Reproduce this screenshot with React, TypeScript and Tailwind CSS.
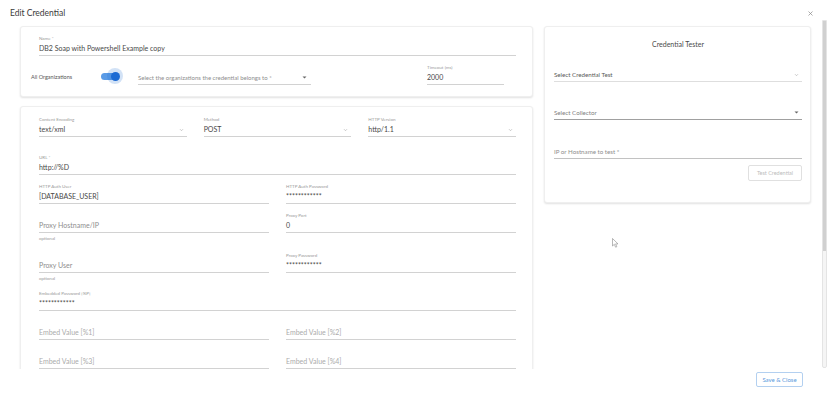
import React from 'react';

function Chevron() {
  return (
    <svg width="5" height="4" viewBox="0 0 5 4" className="shrink-0">
      <path d="M1 1.2 L2.5 2.7 L4 1.2" fill="none" stroke="#a8a8a8" strokeWidth="0.6" />
    </svg>
  );
}

function Caret() {
  return (
    <svg width="5" height="3" viewBox="0 0 5 3" className="shrink-0">
      <path d="M0.5 0.5 H4.5 L2.5 2.6 Z" fill="#666" />
    </svg>
  );
}

interface FieldProps {
  label?: string;
  value?: string;
  placeholder?: string;
  chevron?: boolean;
  helper?: string;
  dim?: boolean;
}

function Field({ label, value, placeholder, chevron, helper, dim }: FieldProps) {
  return (
    <div>
      <div className="h-[8px] text-[4.5px] leading-[8px] text-[#9a9a9a]">{label}</div>
      <div className="h-[13px] border-b border-[#d2d2d2] flex items-start justify-between pr-[3px]">
        {value ? (
          <span className="text-[7px] leading-[11px] text-[#484848]">{value}</span>
        ) : (
          <span className={`text-[7px] leading-[11px] ${dim ? 'text-[#ababab]' : 'text-[#8e8e8e]'}`}>{placeholder}</span>
        )}
        {chevron && (
          <span className="h-[11px] flex items-center">
            <Chevron />
          </span>
        )}
      </div>
      {helper && <div className="h-[11px] pt-[3px] text-[4.5px] leading-[6px] text-[#9a9a9a]">{helper}</div>}
    </div>
  );
}

function Toggle() {
  return (
    <div className="relative w-[37px] h-[16px] mb-[1px] shrink-0">
      <div className="absolute left-0 top-[4.5px] w-[18px] h-[7px] rounded-full bg-[#5a9be6]" />
      <div className="absolute left-[6px] top-0 w-[16px] h-[16px] rounded-full bg-[#1f6fd4]/20" />
      <div className="absolute left-[9.5px] top-[3.5px] w-[9px] h-[9px] rounded-full bg-[#1b6ad3]" />
    </div>
  );
}

const card = 'bg-white rounded-[3px] border border-[#efefef] shadow-[0_1px_2px_rgba(0,0,0,0.12)]';

export default function App() {
  return (
    <div className="relative w-[827px] h-[400px] bg-white overflow-hidden font-[Lato,sans-serif] flex flex-col">
      <div className="h-[20px] shrink-0 flex items-start justify-between pt-[8px] pl-[10px] pr-[14px]">
        <h1 className="text-[8.5px] leading-[10px] text-[#3a3a3a]">Edit Credential</h1>
        <svg width="5" height="5" viewBox="0 0 5 5" className="mt-[3px]">
          <path d="M0.5 0.5 L4.5 4.5 M4.5 0.5 L0.5 4.5" stroke="#888" strokeWidth="0.7" />
        </svg>
      </div>

      <div className="h-[349px] shrink-0 flex overflow-hidden">
        <div className="ml-[20px] w-[513px] pt-[6px] flex flex-col">
          <div className={`${card} h-[71px] shrink-0 pt-[8px]`}>
            <div className="ml-[18px] mr-[16px]">
              <Field label="Name *" value="DB2 Soap with Powershell Example copy" />
            </div>
            <div className="flex items-end mt-[8px] ml-[10px]">
              <span className="w-[70px] h-[6px] mb-[5px] text-[5.5px] leading-[6px] text-[#555]">All Organizations</span>
              <Toggle />
              <div className="w-[173px] h-[13px] border-b border-[#d2d2d2] flex items-start justify-between pr-[4px]">
                <span className="text-[6px] leading-[11px] text-[#8e8e8e]">Select the organizations the credential belongs to *</span>
                <span className="h-[11px] flex items-center">
                  <Caret />
                </span>
              </div>
              <div className="ml-[116px] w-[77px]">
                <Field label="Timeout (ms)" value="2000" />
              </div>
            </div>
          </div>

          <div className={`${card} mt-[9px] shrink-0 pt-[9px] pl-[18px] pr-[16px] pb-[20px]`}>
            <div className="grid grid-cols-3 gap-x-[17px]">
              <Field label="Content Encoding" value="text/xml" chevron />
              <Field label="Method" value="POST" chevron />
              <Field label="HTTP Version" value="http/1.1" chevron />
            </div>
            <div className="mt-[17px]">
              <Field label="URL *" value="http://%D" />
            </div>
            <div className="grid grid-cols-2 gap-x-[17px] mt-[8px]">
              <Field label="HTTP Auth User" value="[DATABASE_USER]" />
              <Field label="HTTP Auth Password" value="************" />
            </div>
            <div className="grid grid-cols-2 gap-x-[17px] mt-[8px]">
              <Field placeholder="Proxy Hostname/IP" helper="optional" />
              <Field label="Proxy Port" value="0" />
            </div>
            <div className="grid grid-cols-2 gap-x-[17px] mt-[8px]">
              <Field placeholder="Proxy User" helper="optional" />
              <Field label="Proxy Password" value="************" />
            </div>
            <div className="mt-[6px]">
              <Field label="Embedded Password [%P]" value="************" />
            </div>
            <div className="grid grid-cols-2 gap-x-[17px] mt-[8px]">
              <Field placeholder="Embed Value [%1]" dim />
              <Field placeholder="Embed Value [%2]" dim />
            </div>
            <div className="grid grid-cols-2 gap-x-[17px] mt-[8px]">
              <Field placeholder="Embed Value [%3]" dim />
              <Field placeholder="Embed Value [%4]" dim />
            </div>
          </div>
        </div>

        <div className="ml-[11px] w-[267px] pt-[6px]">
          <div className={`${card} h-[177px] pt-[12px] pl-[9px] pr-[8px]`}>
            <div className="text-center text-[7px] leading-[10px] text-[#4a4a4a]">Credential Tester</div>
            <div className="mt-[20px] h-[13px] border-b border-[#dedede] flex items-start justify-between pr-[3px]">
              <span className="text-[6.2px] leading-[11px] text-[#585858]">Select Credential Test</span>
              <span className="h-[11px] flex items-center">
                <Chevron />
              </span>
            </div>
            <div className="mt-[25px] h-[13px] border-b border-[#a0a0a0] flex items-start justify-between pr-[3px]">
              <span className="text-[6.2px] leading-[11px] text-[#808080]">Select Collector</span>
              <span className="h-[11px] flex items-center">
                <Caret />
              </span>
            </div>
            <div className="mt-[26px] h-[13px] border-b border-[#c2c2c2] flex items-start">
              <span className="text-[6.2px] leading-[11px] text-[#8e8e8e]">IP or Hostname to test *</span>
            </div>
            <div className="mt-[6px] flex justify-end">
              <button className="h-[16px] w-[54px] rounded-[2px] border border-[#e0e0e0] text-[5.5px] text-[#bcbcbc]">
                Test Credential
              </button>
            </div>
          </div>
        </div>

        <div className="ml-[11px] w-[5px] h-[348px] rounded-b-[2px] border border-[#e4e4e4] bg-[#f5f5f5] flex flex-col">
          <div className="h-[230px] bg-[#d0d0d0]" />
        </div>
      </div>

      <div className="h-[31px] shrink-0 pt-[3px] pr-[24px] flex justify-end items-start">
        <button className="h-[15px] w-[47px] rounded-[2px] border border-[#b3d0f0] text-[6px] text-[#5a98dc]">
          Save &amp; Close
        </button>
      </div>

      <svg width="7" height="10" viewBox="0 0 7 10" className="absolute left-[612px] top-[238px]">
        <path d="M0.5 0.5 L0.5 8 L2.3 6.3 L3.6 9.2 L4.8 8.7 L3.6 5.9 L6 5.9 Z" fill="#fff" stroke="#888" strokeWidth="0.6" strokeLinejoin="round" />
      </svg>
    </div>
  );
}
